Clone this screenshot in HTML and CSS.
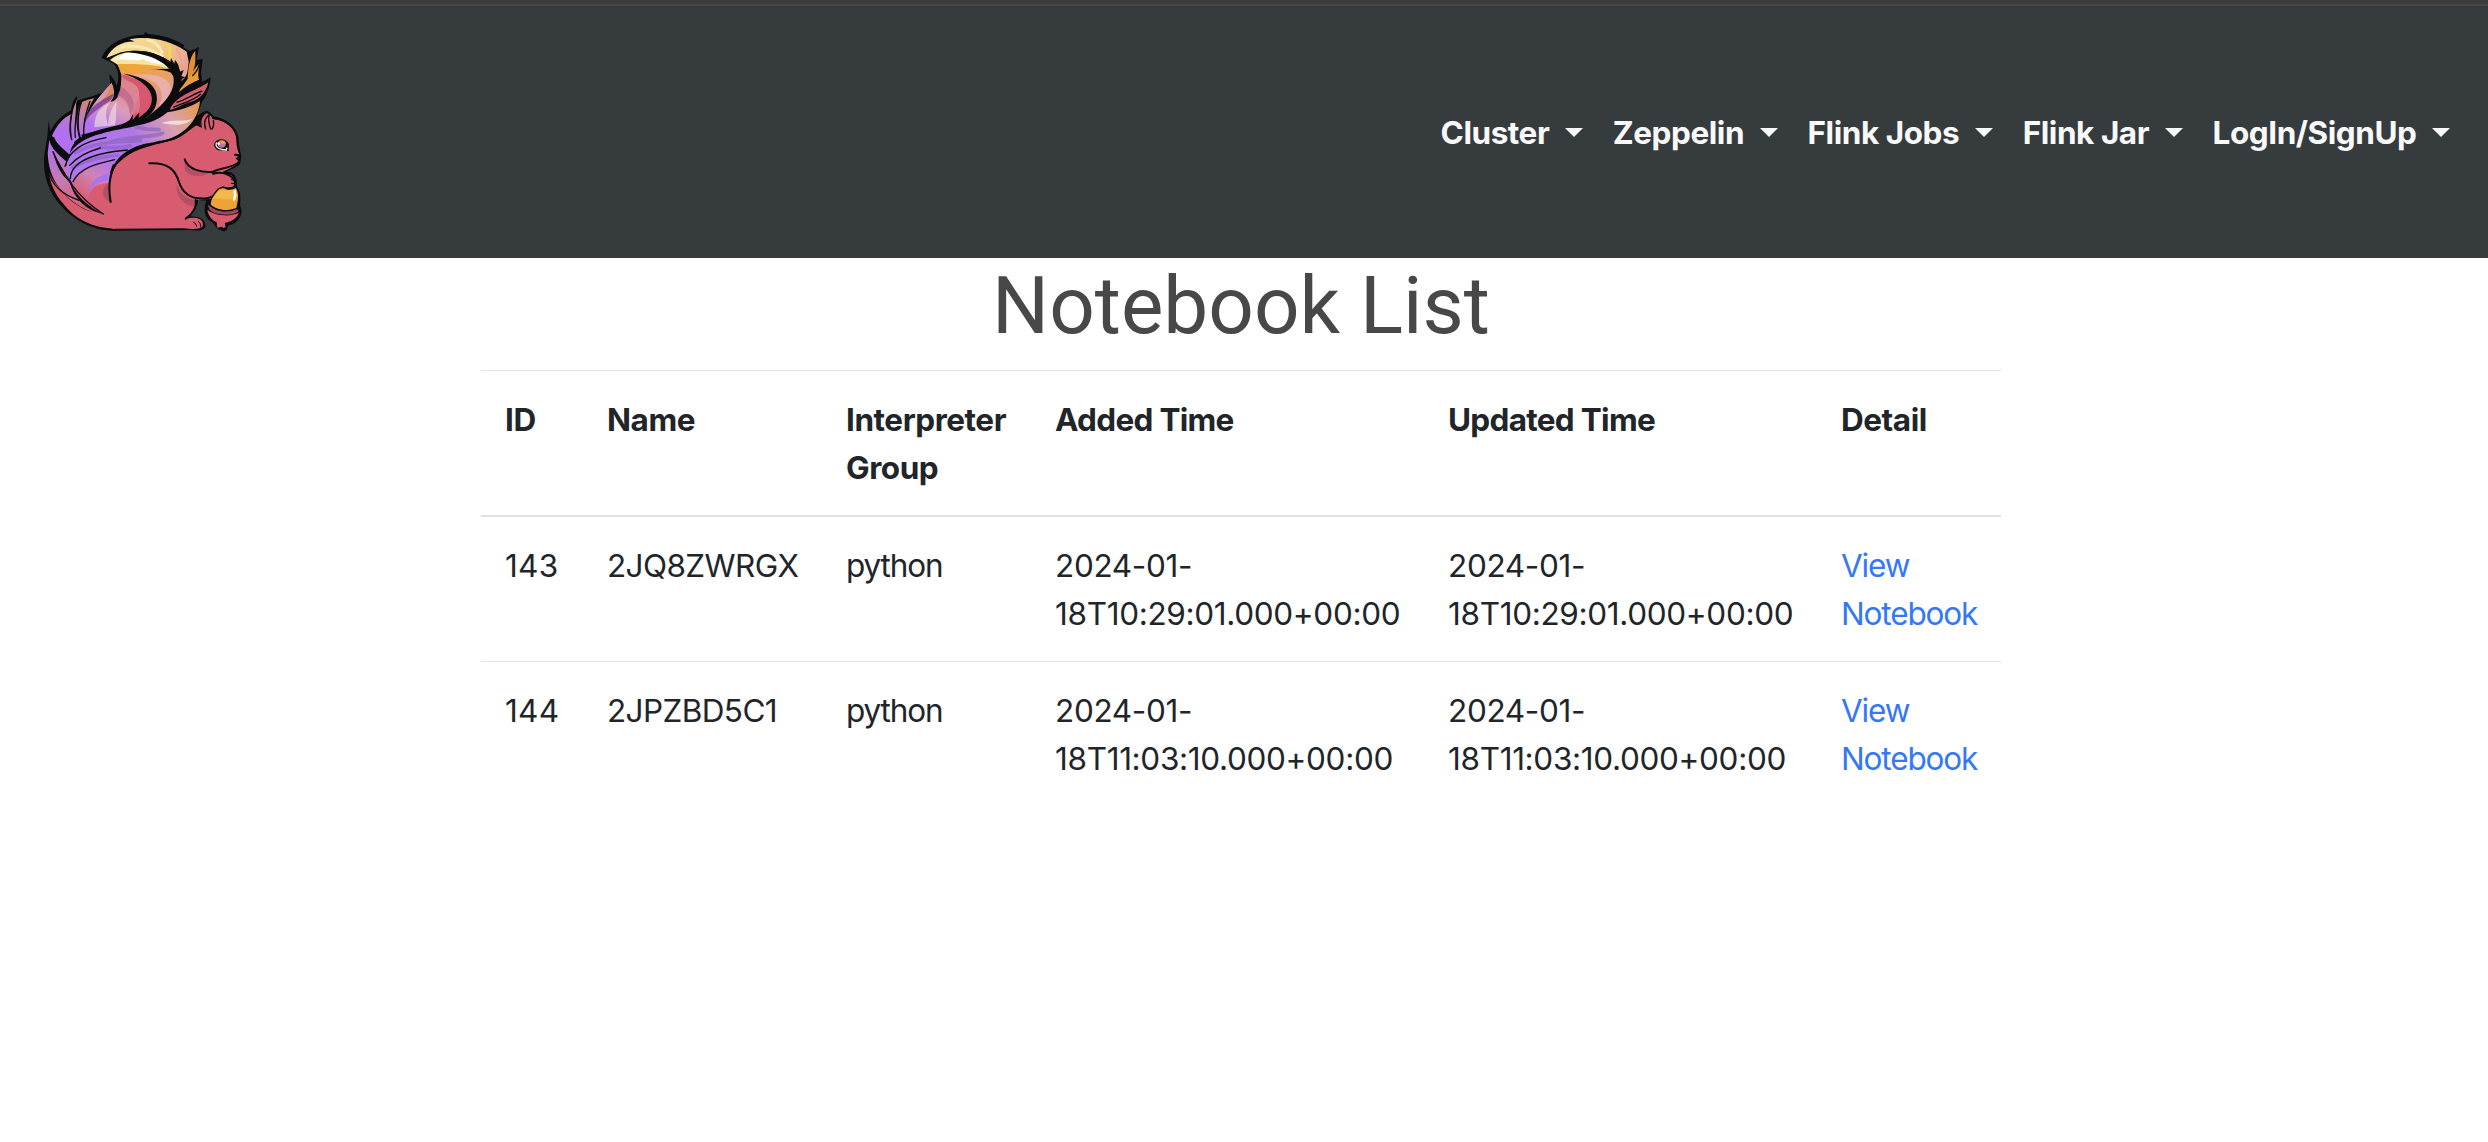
FILE: index.html
```html
<!DOCTYPE html>
<html lang="en">
<head>
<meta charset="utf-8">
<title>Notebook List</title>
<link rel="stylesheet" href="styles.css">
</head>
<body>
<header class="navbar">
  <a class="brand" href="#" aria-label="Home">
    <svg class="logo" viewBox="120 90 615 612">
      <defs>
        <linearGradient id="tail" gradientUnits="userSpaceOnUse" x1="440" y1="170" x2="330" y2="400">
          <stop offset="0" stop-color="#f3c67c"/><stop offset=".4" stop-color="#e2867e"/><stop offset=".7" stop-color="#d89cbc"/><stop offset="1" stop-color="#b072ee"/>
        </linearGradient>
        <linearGradient id="left" gradientUnits="userSpaceOnUse" x1="300" y1="250" x2="230" y2="410">
          <stop offset="0" stop-color="#ee9c3e"/><stop offset=".4" stop-color="#cb8482"/><stop offset="1" stop-color="#b070f0"/>
        </linearGradient>
        <linearGradient id="sweep" gradientUnits="userSpaceOnUse" x1="600" y1="320" x2="300" y2="470">
          <stop offset="0" stop-color="#e39a4c"/><stop offset=".28" stop-color="#dba1ac"/><stop offset=".65" stop-color="#af76e6"/><stop offset="1" stop-color="#b175ef"/>
        </linearGradient>
        <linearGradient id="low" gradientUnits="userSpaceOnUse" x1="150" y1="440" x2="260" y2="620">
          <stop offset="0" stop-color="#b070ec"/><stop offset=".5" stop-color="#c77ab0"/><stop offset="1" stop-color="#d75c70"/>
        </linearGradient>
        <linearGradient id="cream" gradientUnits="userSpaceOnUse" x1="330" y1="120" x2="570" y2="240">
          <stop offset="0" stop-color="#f4e3a2"/><stop offset=".5" stop-color="#f5cf88"/><stop offset="1" stop-color="#e79a9c"/>
        </linearGradient>
        <linearGradient id="orange" gradientUnits="userSpaceOnUse" x1="430" y1="200" x2="490" y2="360">
          <stop offset="0" stop-color="#f0a43a"/><stop offset=".5" stop-color="#e29b86"/><stop offset="1" stop-color="#d97788"/>
        </linearGradient>
        <linearGradient id="inner" gradientUnits="userSpaceOnUse" x1="340" y1="480" x2="250" y2="600">
          <stop offset="0" stop-color="#ae72ec"/><stop offset=".5" stop-color="#cf82b8"/><stop offset="1" stop-color="#d75c70"/>
        </linearGradient>
      </defs>
      <!-- outline of tail and body -->
      <path fill="#0b0c0d" d="M304 174C322 136 356 108 431 104L436 96L444 102C485 104 525 117 553 136L551 143L570 153L597 141L590 180L608 177L603 220L607 246L632 232C629 270 617 292 606 306C601 320 596 335 590 347C601 345 607 333 620 333C631 335 636 345 641 349C677 355 706 380 715 416C717 438 722 456 724 470C721 479 724 492 714 497C701 506 687 509 681 515C702 515 713 531 711 561C723 576 722 597 720 617C730 635 724 655 702 671L684 677C683 690 673 700 663 690C648 689 646 674 633 664C615 655 608 632 619 602L594 600C594 620 579 639 564 651C594 646 619 658 616 680C612 691 595 694 570 690L340 692C272 691 216 656 178 611C148 576 130 532 132 476C134 452 139 430 142 410L146 362L151 394C166 366 188 343 213 331C216 312 221 296 232 288L230 302L276 289C298 280 321 273 332 257L327 222C340 232 347 248 350 258C359 233 356 203 337 188Z"/>
      <!-- left side locks -->
      <path fill="url(#left)" d="M156 407C170 377 190 353 213 343C207 376 212 412 223 430C214 441 211 451 209 464C189 447 168 427 156 407Z"/>
      <path fill="url(#left)" d="M219 428C209 385 212 337 231 299C226 340 228 373 237 414Z"/>
      <path fill="url(#left)" d="M240 410C229 370 230 330 246 306C258 300 269 298 282 295C260 331 251 365 249 413Z"/>
      <path fill="url(#tail)" d="M252 406C249 356 272 315 335 248C346 273 344 292 331 305C351 303 365 285 364 225C359 202 350 189 341 180C383 164 451 175 506 203C531 240 514 305 450 347C386 386 303 380 252 406Z"/>
      <path fill="#d98c55" d="M284 317C306 303 324 289 334 255C345 279 338 295 324 304C309 307 296 312 284 317Z"/>
      <path fill="#70308c" opacity=".7" d="M253 372C258 329 286 312 341 280C338 303 321 307 303 321C276 340 260 354 253 372Z"/>
      <path fill="#f3dce4" opacity=".65" d="M283 382C284 340 301 321 329 309C312 330 318 356 324 374C327 350 331 327 351 302C345 330 352 357 344 376Z"/>
      <path fill="#d6576e" d="M368 239C420 249 428 280 406 311C395 331 398 350 396 366C429 352 459 329 461 302C462 264 421 237 368 224Z"/>
      <path fill="#db8298" opacity=".75" d="M352 289C383 306 389 325 389 356L410 335L411 350C430 310 423 260 366 232L361 268Z"/>
      <path fill="#8b3a7d" opacity=".3" d="M363 260C404 284 409 315 392 345C386 308 377 292 354 287Z"/>
      <path fill="url(#orange)" d="M363 218C430 223 474 253 466 302C461 329 447 344 437 352C498 328 526 274 523 232C504 197 440 175 352 188Z"/>
      <path fill="#ebb4b4" opacity=".8" d="M393 225C445 219 503 223 513 263C511 290 490 318 468 334C503 278 489 239 393 225Z"/>
      <path fill="#f5e5a1" d="M330 180C350 161 395 148 437 156C482 165 513 184 523 210C479 196 420 190 351 193Z"/>
      <path fill="#fffefa" d="M338 180L376 160C422 148 484 171 507 196C472 190 447 190 430 177C411 187 380 174 338 180Z"/>
      <!-- curled tip -->
      <path fill="url(#cream)" d="M319 174C337 141 366 123 406 125L388 118C444 106 511 119 560 155L566 185C563 215 562 229 545 243L539 209C491 157 424 143 363 157Z"/>
      <path fill="none" stroke="#f6e9b2" stroke-width="9" d="M440 119Q476 125 487 160M360 142Q420 127 490 169"/>
      <path fill="none" stroke="#f5de3b" stroke-width="9" opacity=".8" d="M501 133Q514 153 509 177"/>
      <path fill="none" stroke="#ee9d86" stroke-width="6" opacity=".7" d="M529 145Q549 176 544 213M558 170L552 217"/>
      <path fill="#0b0c0d" d="M370 156C422 146 475 158 511 186L513 174L523 191L525 180C540 196 537 210 539 215L551 210L544 229L556 231L539 244C541 286 510 328 465 348L437 354C488 318 529 276 520 229C505 183 439 159 370 156Z"/>
      <path fill="#0b0c0d" d="M445 208L513 206L523 224C497 207 470 209 445 208Z"/>
      <path fill="#0b0c0d" d="M370 221C433 229 478 256 470 306C465 332 452 343 438 354L451 353C423 373 376 372 351 390C315 386 287 397 247 418L244 404L279 396C326 378 366 379 389 360L399 342L398 360L418 337L416 354L439 335C475 298 454 247 370 221Z"/>
      <!-- right side tufts -->
      <path fill="#df8f37" d="M563 240C563 206 569 170 586 152C586 177 588 193 579 215Z"/>
      <path fill="#e89c3b" d="M540 268C566 236 577 215 598 190C596 211 593 226 597 239C577 248 555 258 537 277Z"/>
      <path fill="#d85c70" d="M509 329C532 282 588 274 625 247C616 285 590 304 561 309C538 317 527 328 509 329Z"/>
      <path fill="none" stroke="#0b0c0d" stroke-width="4" d="M529 307C557 301 580 281 607 273M520 322C545 310 580 303 603 281M577 228Q597 209 598 186"/>
      <!-- lower sweep of the tail -->
      <path fill="url(#sweep)" d="M201 522C188 463 232 418 302 402C376 379 450 382 502 337C542 331 569 322 600 304C594 365 549 406 494 421C444 429 382 440 346 491C302 501 247 511 222 560Z"/>
      <path fill="none" stroke="#8b64bd" stroke-width="11" stroke-linecap="round" opacity=".65" d="M225 458C299 420 355 427 421 421M315 431C380 406 452 414 488 400M408 382Q445 390 477 389M300 442Q354 446 391 437M218 504C249 480 303 472 353 465"/>
      <path fill="#fae8e4" opacity=".8" d="M485 369C523 356 552 366 579 356C554 378 525 377 485 369Z"/>
      <path fill="url(#low)" d="M143 458L148 419C152 443 174 464 204 488C198 519 209 546 227 578C244 609 274 637 312 642C264 640 214 610 179 565C154 532 145 498 143 458Z"/>
      <path fill="#d75c70" d="M145 515C171 565 219 619 274 635L340 645L344 686C262 683 216 646 188 609C165 582 151 550 145 515Z"/>
      <path fill="url(#inner)" d="M216 558C231 516 279 487 344 477L331 514L335 608L350 646C304 638 247 620 216 558Z"/>
      <path fill="#ad72ed" d="M262 587C270 542 300 523 331 519L328 541C299 545 272 555 262 587Z"/>
      <path fill="#d75c70" d="M265 601C266 562 298 549 329 548L334 606L380 660L288 637Z"/>
      <!-- body and head -->
      <path fill="#d75c70" d="M340 686C300 676 286 654 267 625L332 600C325 543 336 499 367 476C415 435 480 434 526 417C557 401 568 378 588 374L600 381C600 360 606 344 619 339C631 341 635 352 640 357C684 363 710 393 709 419C709 442 715 457 719 464L707 475L714 482C709 499 689 504 667 516L683 524C698 521 706 537 704 560C695 567 680 566 670 562C656 577 652 589 640 596L587 600C591 623 578 641 556 657C587 648 613 656 608 678C606 686 585 689 552 685Z"/>
      <path fill="#ac4c66" opacity=".8" d="M553 477C566 505 590 514 632 516C608 535 563 532 554 507ZM529 552C544 590 561 595 587 601L585 622C551 613 528 594 529 552ZM327 549C331 577 335 592 331 607C302 592 301 565 327 549Z"/>
      <g fill="none" stroke="#0b0c0d" stroke-width="6" stroke-linecap="round" stroke-linejoin="round">
        <path d="M448 490C506 487 526 511 537 546C550 586 581 599 620 595C645 592 652 575 668 563M554 478C565 510 606 518 639 515C661 503 690 505 713 489M587 600C592 626 577 642 557 656M332 606C322 553 332 502 357 483C408 435 479 430 518 417C555 405 568 382 592 372M639 521C675 512 711 530 704 560Q688 569 670 562M705 464L718 466M640 355C679 357 708 381 713 417"/>
        <path stroke-width="4" d="M592 374L604 381C598 358 609 341 621 337Q632 340 640 355M617 387C609 365 618 350 628 344C623 362 628 376 632 387M640 362Q643 378 636 387"/>
        <path stroke-width="3" d="M694 539L706 541M694 550L707 551M581 667Q588 668 590 679M595 664Q604 670 602 681"/>
        <path stroke-width="4" d="M226 412C222 390 230 342 231 308M215 419C203 381 214 354 215 340M240 411C228 373 238 321 244 308M270 304Q249 361 251 403M197 497C205 452 253 424 318 413M211 536C213 485 278 459 382 450M209 496C234 468 265 454 301 444M219 545C240 503 290 491 344 479M159 455C184 512 224 587 310 642M141 508C157 559 188 583 237 601M161 413Q176 451 201 466M209 463L195 499"/>
      </g>
      <path fill="#0b0c0d" d="M158 455C180 492 192 514 212 545C190 535 171 503 158 455ZM207 538C222 580 262 623 313 643C260 633 220 597 207 538ZM334 530C334 478 385 435 463 427L492 419C412 435 366 465 345 492Z"/>
      <!-- eye -->
      <path fill="#111" d="M642 436C644 414 679 411 687 433L686 454L671 450C656 454 645 450 642 436Z"/>
      <path fill="none" stroke="#f5ebef" stroke-width="4" d="M650 427C644 439 653 449 679 450L681 443"/>
      <ellipse cx="665" cy="432" rx="12" ry="11" fill="#b87899"/>
      <path fill="#f1a13a" d="M660 422Q674 418 678 433L665 431Z"/>
      <circle cx="656" cy="431" r="4" fill="#fff"/>
      <!-- acorn -->
      <path fill="#eda435" stroke="#0b0c0d" stroke-width="4" d="M655 567Q670 559 681 567C694 569 703 565 708 561C721 579 716 603 710 628C693 637 648 634 630 614C629 598 642 581 655 567Z"/>
      <path fill="#f2b94d" d="M655 572L706 569C714 584 705 598 688 598C668 601 648 589 636 599Z"/>
      <path fill="none" stroke="#fff" stroke-width="7" stroke-linecap="round" d="M704 573Q708 586 702 599"/>
      <path fill="#9d465e" stroke="#0b0c0d" stroke-width="4" d="M624 610C642 632 677 639 710 626L718 628C717 644 698 647 675 646C641 644 617 633 624 610Z"/>
      <path fill="#d75c70" d="M622 630C645 647 688 652 716 639C711 654 697 664 674 669L677 681Q670 686 666 680L652 683L650 667C637 661 625 648 622 630Z"/>
    </svg>
  </a>
  <nav class="menu">
    <a class="menu-item" href="#">Cluster<i class="caret"></i></a>
    <a class="menu-item" href="#">Zeppelin<i class="caret"></i></a>
    <a class="menu-item" href="#">Flink Jobs<i class="caret"></i></a>
    <a class="menu-item" href="#">Flink Jar<i class="caret"></i></a>
    <a class="menu-item" href="#">LogIn/SignUp<i class="caret"></i></a>
  </nav>
</header>
<main class="content">
  <h1 class="title">Notebook List</h1>
  <table class="table">
    <colgroup><col class="c-id"><col class="c-name"><col class="c-group"><col class="c-time"><col class="c-time"><col class="c-detail"></colgroup>
    <thead>
      <tr><th>ID</th><th>Name</th><th>Interpreter<br>Group</th><th class="time-head">Added Time</th><th class="time-head">Updated Time</th><th>Detail</th></tr>
    </thead>
    <tbody>
      <tr><td class="id">143</td><td class="code">2JQ8ZWRGX</td><td class="word">python</td><td class="time">2024-01-<br>18T10:29:01.000+00:00</td><td class="time">2024-01-<br>18T10:29:01.000+00:00</td><td class="word"><a href="#">View<br>Notebook</a></td></tr>
      <tr><td class="id">144</td><td class="code">2JPZBD5C1</td><td class="word">python</td><td class="time">2024-01-<br>18T11:03:10.000+00:00</td><td class="time">2024-01-<br>18T11:03:10.000+00:00</td><td class="word"><a href="#">View<br>Notebook</a></td></tr>
    </tbody>
  </table>
</main>
</body>
</html>
```
FILE: styles.css
```css
* { box-sizing: border-box; }
body {
  margin: 0;
  background: #fff;
  color: #212529;
  font: 400 31.5px/48px Inter, "Liberation Sans", sans-serif;
}
.navbar {
  display: flex;
  align-items: center;
  justify-content: space-between;
  height: 258px;
  padding: 2px 38px 0 40px;
  background: #363b3e;
  border-top: 4px solid #3c3c3c;
  box-shadow: inset 0 2px #474747;
}
.brand, .logo { display: block; }
.logo { width: 205px; height: 204px; }
.menu { display: flex; gap: 30px; padding-top: 2px; }
.menu-item {
  display: flex;
  align-items: center;
  gap: 15.5px;
  color: #f8f9fa;
  font-weight: 700;
  letter-spacing: -.45px;
  text-decoration: none;
}
.caret {
  margin-top: -2px;
  border: 9px solid transparent;
  border-top-color: #f8f9fa;
  border-bottom: 0;
}
.content {
  width: 1520px;
  margin-left: 481px;
}
.title {
  margin: 0 0 16px;
  color: #484848;
  font: 400 80px/96px Roboto, sans-serif;
  text-align: center;
}
.table {
  width: 100%;
  table-layout: fixed;
  border-collapse: separate;
  border-spacing: 0;
}
.c-id { width: 102px; }
.c-name { width: 239px; }
.c-group { width: 209px; }
.c-time { width: 393px; }
.c-detail { width: 184px; }
th, td {
  padding: 25px 0 23px 24px;
  text-align: left;
  vertical-align: top;
  white-space: nowrap;
}
th {
  border-top: 1px solid #dee2e6;
  border-bottom: 2px solid #dee2e6;
  font-weight: 700;
  letter-spacing: -.45px;
}
.time-head { letter-spacing: -.7px; }
.id { letter-spacing: .3px; }
.code { letter-spacing: -.6px; }
.word { letter-spacing: -1.15px; }
.time { letter-spacing: -.33px; }
tbody tr + tr td { border-top: 1px solid #dee2e6; }
td a { color: #3478f6; text-decoration: none; }
```
